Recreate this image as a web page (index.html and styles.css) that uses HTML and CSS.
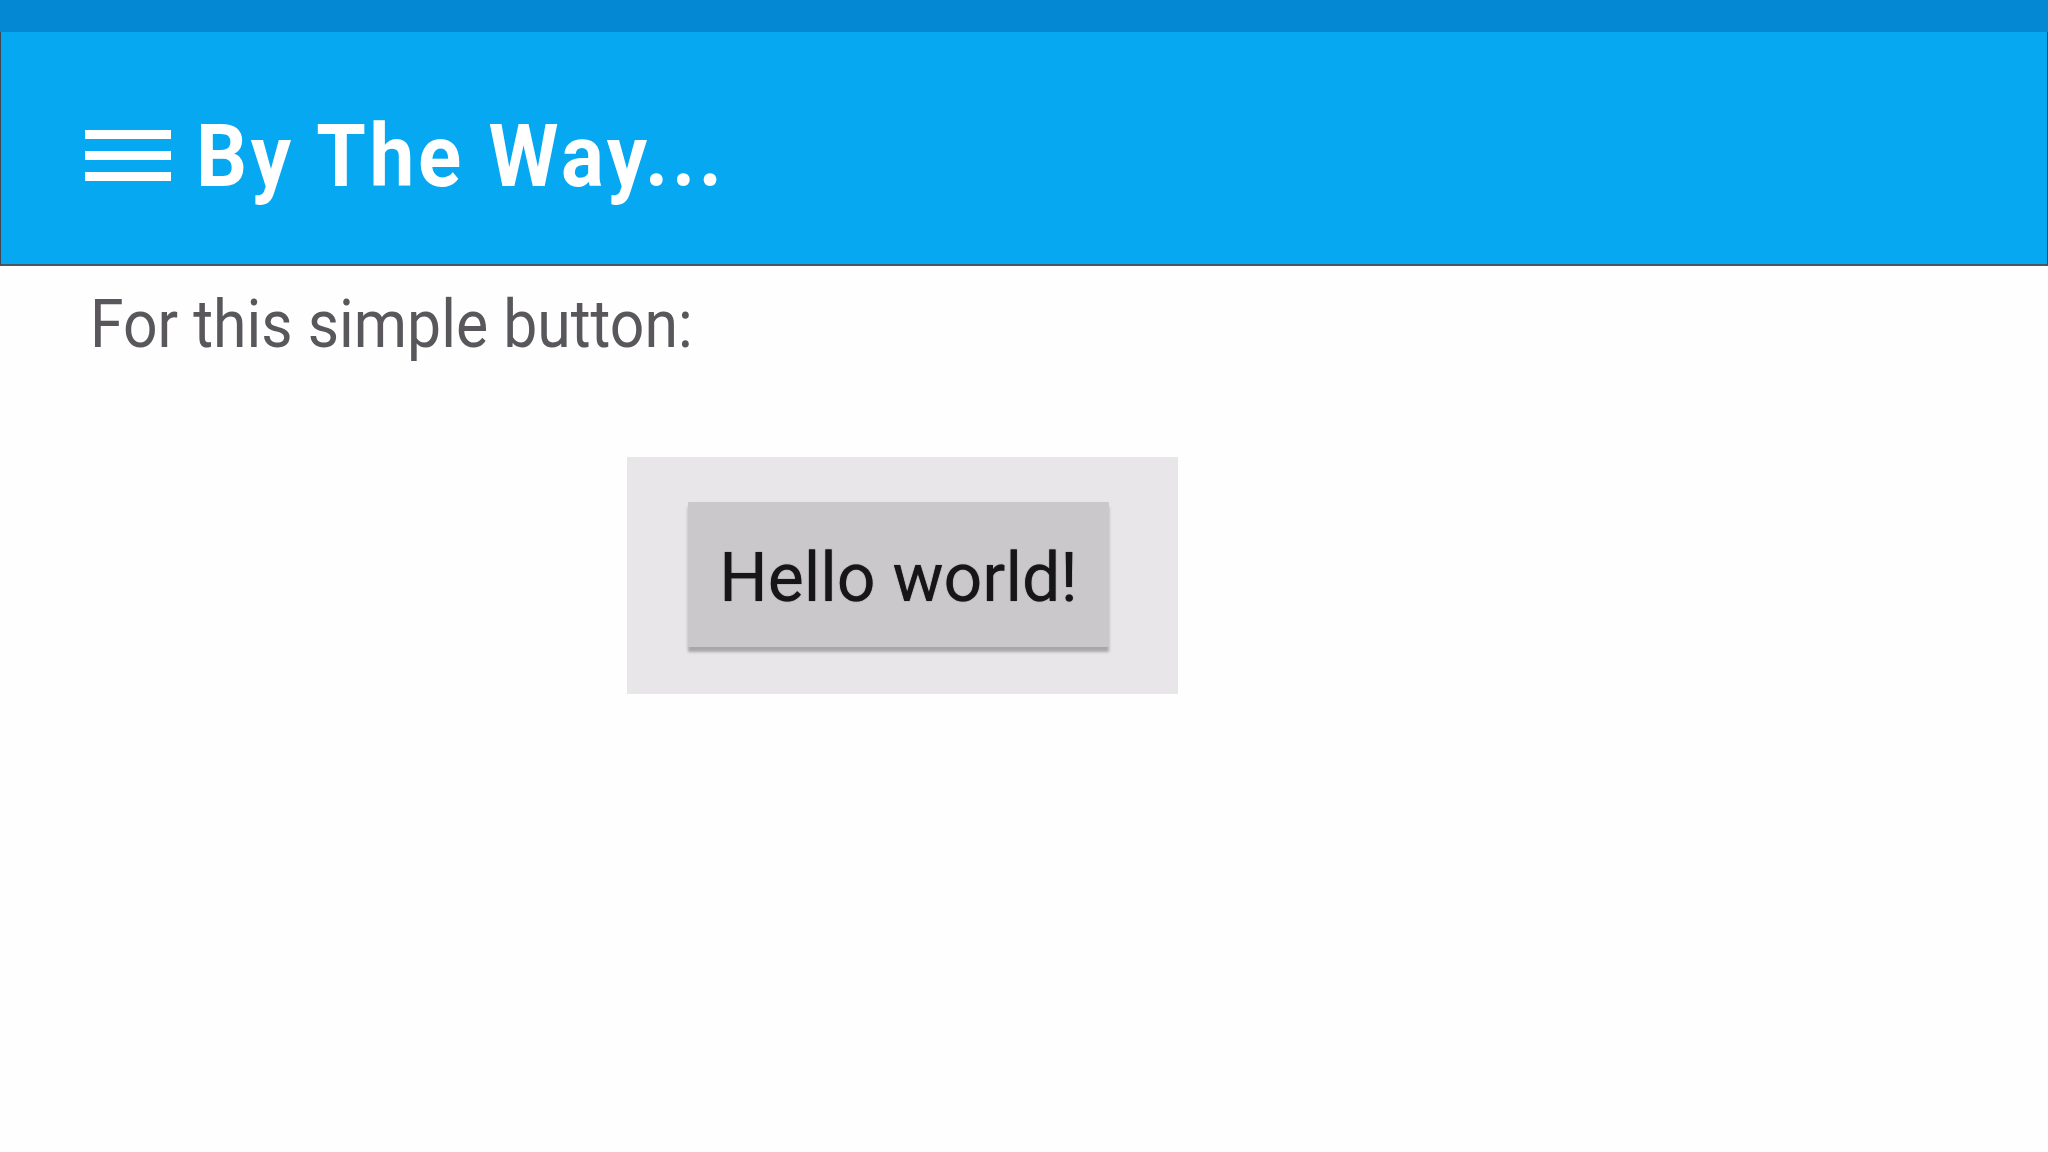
FILE: index.html
```html
<!DOCTYPE html>
<html lang="en">
<head>
    <meta charset="UTF-8">
    <title>By The Way...</title>
    <link rel="stylesheet" href="styles.css">
</head>
<body>
    <div class="status-bar"></div>
    <header class="app-bar">
        <svg class="menu-icon" width="86" height="51" viewBox="0 0 86 51">
            <rect x="0" y="0" width="86" height="9" fill="#fff"/>
            <rect x="0" y="21" width="86" height="9" fill="#fff"/>
            <rect x="0" y="42" width="86" height="9" fill="#fff"/>
        </svg>
        <h1>By The Way...</h1>
    </header>
    <main class="content">
        <p class="lead">For this simple button:</p>
        <div class="preview">
            <button class="demo-button">Hello world!</button>
        </div>
    </main>
</body>
</html>
```

FILE: styles.css
```css
body {
    margin: 0;
    background: #fefefe;
    font-family: Roboto, "Liberation Sans", sans-serif;
}

.status-bar {
    height: 32px;
    background: #0588d4;
}

.app-bar {
    display: flex;
    align-items: flex-start;
    gap: 25px;
    height: 234px;
    box-sizing: border-box;
    padding: 81px 0 0 84px;
    background: #05a8f1;
    border-left: 1px solid #3d4a55;
    border-right: 1px solid #3d4a55;
    border-bottom: 2px solid #4b5662;
}

.menu-icon {
    margin-top: 17px;
    flex-shrink: 0;
}

.app-bar h1 {
    margin: 0;
    font-size: 87px;
    line-height: 1;
    font-weight: 700;
    letter-spacing: 4px;
    color: #ffffff;
    transform: scaleX(0.92);
    transform-origin: left;
}

.content {
    padding: 26px 0 0 90px;
}

.lead {
    margin: 0;
    font-size: 66px;
    line-height: 1;
    color: #59575b;
    transform: scaleX(0.92);
    transform-origin: left;
}

.preview {
    width: 551px;
    height: 237px;
    box-sizing: border-box;
    margin: 99px 0 0 537px;
    padding: 45px 0 0 61px;
    background: #e8e6e9;
}

.demo-button {
    display: block;
    width: 421px;
    height: 145px;
    padding: 6px 0 0;
    border: none;
    border-radius: 1px;
    background: #cac8cb;
    box-shadow: 0 5px 3px #a7a6a9;
    font-family: Roboto, "Noto Sans", sans-serif;
    font-size: 68px;
    color: #161517;
    text-shadow: 0 0 1px #333;
}
```
